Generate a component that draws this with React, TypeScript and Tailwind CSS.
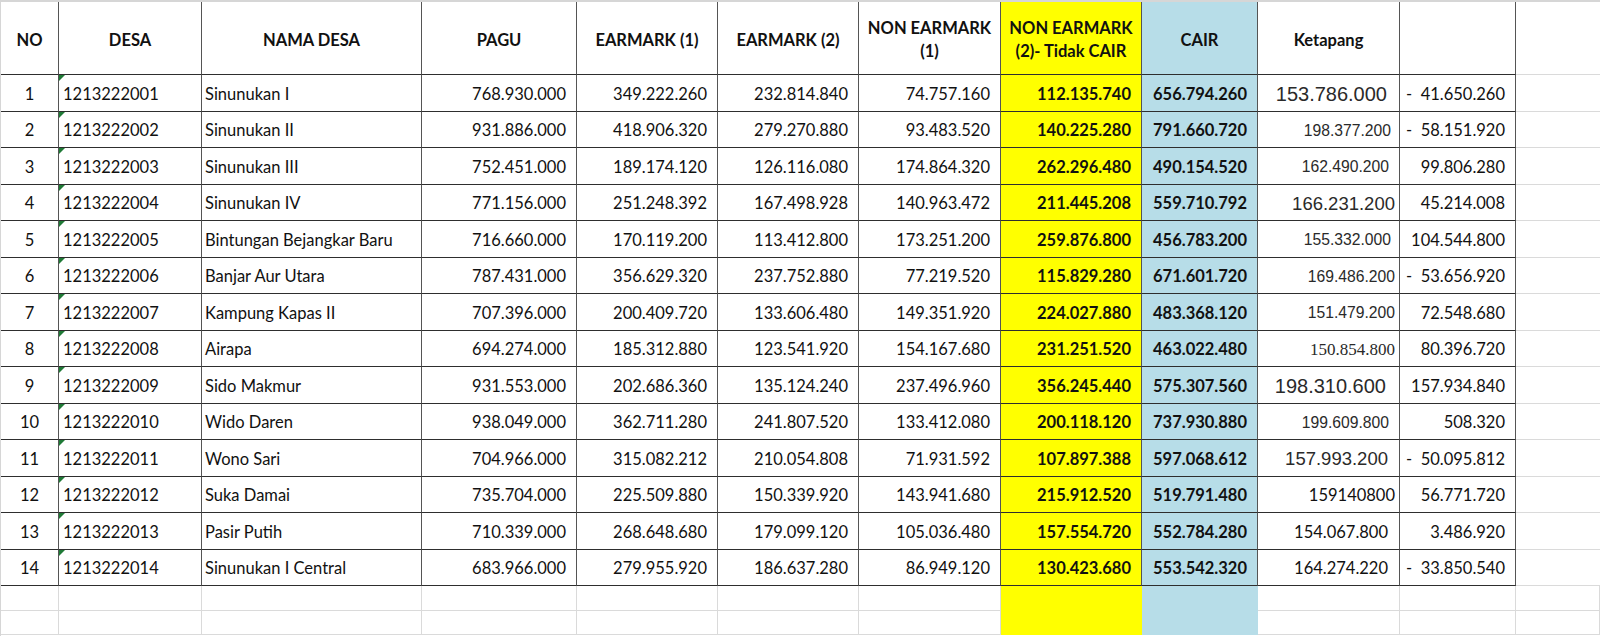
import React from 'react';

type Row = {
  no: number;
  kode: string;
  nama: string;
  pagu: string;
  e1: string;
  e2: string;
  ne1: string;
  ne2: string;
  cair: string;
  ket: string;
  ketCls: string;
  sisa: string;
  neg?: boolean;
};

// ketapang column was typed with mixed fonts in the sheet
const KET_LG = "font-['Liberation_Sans',Arial,sans-serif] text-[20px] text-[#2a2a2a]";
const KET_MD = "font-['Liberation_Sans',Arial,sans-serif] text-[18.5px] text-[#2a2a2a]";
const KET_SM = "font-['Liberation_Sans',Arial,sans-serif] text-[15.7px] text-[#2a2a2a]";
const KET_SERIF = "font-['Liberation_Serif',serif] text-[17px] text-[#2a2a2a]";
const KET_CAL = "text-[16.5px]";

const rows: Row[] = [
  { no: 1, kode: '1213222001', nama: 'Sinunukan I', pagu: '768.930.000', e1: '349.222.260', e2: '232.814.840', ne1: '74.757.160', ne2: '112.135.740', cair: '656.794.260', ket: '153.786.000', ketCls: `${KET_LG} pr-[12px]`, sisa: '41.650.260', neg: true },
  { no: 2, kode: '1213222002', nama: 'Sinunukan II', pagu: '931.886.000', e1: '418.906.320', e2: '279.270.880', ne1: '93.483.520', ne2: '140.225.280', cair: '791.660.720', ket: '198.377.200', ketCls: `${KET_SM} pr-[8px]`, sisa: '58.151.920', neg: true },
  { no: 3, kode: '1213222003', nama: 'Sinunukan III', pagu: '752.451.000', e1: '189.174.120', e2: '126.116.080', ne1: '174.864.320', ne2: '262.296.480', cair: '490.154.520', ket: '162.490.200', ketCls: `${KET_SM} pr-[10px]`, sisa: '99.806.280' },
  { no: 4, kode: '1213222004', nama: 'Sinunukan IV', pagu: '771.156.000', e1: '251.248.392', e2: '167.498.928', ne1: '140.963.472', ne2: '211.445.208', cair: '559.710.792', ket: '166.231.200', ketCls: `${KET_MD} pr-[4px]`, sisa: '45.214.008' },
  { no: 5, kode: '1213222005', nama: 'Bintungan Bejangkar Baru', pagu: '716.660.000', e1: '170.119.200', e2: '113.412.800', ne1: '173.251.200', ne2: '259.876.800', cair: '456.783.200', ket: '155.332.000', ketCls: `${KET_SM} pr-[8px]`, sisa: '104.544.800' },
  { no: 6, kode: '1213222006', nama: 'Banjar Aur Utara', pagu: '787.431.000', e1: '356.629.320', e2: '237.752.880', ne1: '77.219.520', ne2: '115.829.280', cair: '671.601.720', ket: '169.486.200', ketCls: `${KET_SM} pr-[4px]`, sisa: '53.656.920', neg: true },
  { no: 7, kode: '1213222007', nama: 'Kampung Kapas II', pagu: '707.396.000', e1: '200.409.720', e2: '133.606.480', ne1: '149.351.920', ne2: '224.027.880', cair: '483.368.120', ket: '151.479.200', ketCls: `${KET_SM} pr-[4px]`, sisa: '72.548.680' },
  { no: 8, kode: '1213222008', nama: 'Airapa', pagu: '694.274.000', e1: '185.312.880', e2: '123.541.920', ne1: '154.167.680', ne2: '231.251.520', cair: '463.022.480', ket: '150.854.800', ketCls: `${KET_SERIF} pr-[4px]`, sisa: '80.396.720' },
  { no: 9, kode: '1213222009', nama: 'Sido Makmur', pagu: '931.553.000', e1: '202.686.360', e2: '135.124.240', ne1: '237.496.960', ne2: '356.245.440', cair: '575.307.560', ket: '198.310.600', ketCls: `${KET_LG} pr-[13px]`, sisa: '157.934.840' },
  { no: 10, kode: '1213222010', nama: 'Wido Daren', pagu: '938.049.000', e1: '362.711.280', e2: '241.807.520', ne1: '133.412.080', ne2: '200.118.120', cair: '737.930.880', ket: '199.609.800', ketCls: `${KET_SM} pr-[10px]`, sisa: '508.320' },
  { no: 11, kode: '1213222011', nama: 'Wono Sari', pagu: '704.966.000', e1: '315.082.212', e2: '210.054.808', ne1: '71.931.592', ne2: '107.897.388', cair: '597.068.612', ket: '157.993.200', ketCls: `${KET_MD} pr-[11px]`, sisa: '50.095.812', neg: true },
  { no: 12, kode: '1213222012', nama: 'Suka Damai', pagu: '735.704.000', e1: '225.509.880', e2: '150.339.920', ne1: '143.941.680', ne2: '215.912.520', cair: '519.791.480', ket: '159140800', ketCls: `${KET_CAL} pr-[4px]`, sisa: '56.771.720' },
  { no: 13, kode: '1213222013', nama: 'Pasir Putih', pagu: '710.339.000', e1: '268.648.680', e2: '179.099.120', ne1: '105.036.480', ne2: '157.554.720', cair: '552.784.280', ket: '154.067.800', ketCls: `${KET_CAL} pr-[11px]`, sisa: '3.486.920' },
  { no: 14, kode: '1213222014', nama: 'Sinunukan I Central', pagu: '683.966.000', e1: '279.955.920', e2: '186.637.280', ne1: '86.949.120', ne2: '130.423.680', cair: '553.542.320', ket: '164.274.220', ketCls: `${KET_CAL} pr-[11px]`, sisa: '33.850.540', neg: true },
];

const COLS =
  'grid grid-cols-[58px_143px_220px_155px_141px_141px_142px_141px_116px_142px_116px_1fr]';

const cell = 'border-r border-b border-r-[#555] border-b-[#2e2e2e] flex items-center';
const data = `${cell} pt-[3px]`;
const num = `${data} justify-end pr-[10px]`;
const head = `${cell} justify-center text-center font-bold leading-[23px] pt-[4px]`;

function GreenMark() {
  return (
    <span className="absolute left-0 top-0 w-0 h-0 border-t-[6px] border-r-[6px] border-t-[#1f7a36] border-r-transparent" />
  );
}

export default function App() {
  return (
    <div className="w-[1600px] h-[636px] bg-white overflow-hidden font-[Lato,Carlito,sans-serif] text-[16.5px] text-[#111] border-t-2 border-l border-[#d6d6d6]">
      {/* Header */}
      <div className={`${COLS} h-[73px]`}>
        <div className={head}>NO</div>
        <div className={head}>DESA</div>
        <div className={head}>NAMA DESA</div>
        <div className={head}>PAGU</div>
        <div className={head}>EARMARK (1)</div>
        <div className={head}>EARMARK (2)</div>
        <div className={head}>
          NON EARMARK
          <br />
          (1)
        </div>
        <div className={`${head} bg-[#ffff00]`}>
          NON EARMARK
          <br />
          (2)- Tidak CAIR
        </div>
        <div className={`${head} bg-[#b7dde8]`}>CAIR</div>
        <div className={head}>Ketapang</div>
        <div className={head}></div>
        <div className="border-b border-[#dadada]"></div>
      </div>

      {/* Data rows */}
      {rows.map((r) => (
        <div key={r.no} className={`${COLS} h-[36.5px]`}>
          <div className={`${data} justify-center`}>{r.no}</div>
          <div className={`${data} relative pl-[4px]`}>
            <GreenMark />
            {r.kode}
          </div>
          <div className={`${data} pl-[3px] whitespace-nowrap`}>{r.nama}</div>
          <div className={num}>{r.pagu}</div>
          <div className={num}>{r.e1}</div>
          <div className={num}>{r.e2}</div>
          <div className={num}>{r.ne1}</div>
          <div className={`${num} bg-[#ffff00] font-bold`}>{r.ne2}</div>
          <div className={`${num} bg-[#b7dde8] font-bold`}>{r.cair}</div>
          <div className={`${data} justify-end ${r.ketCls}`}>{r.ket}</div>
          <div className={`${data} justify-between pl-[6px] pr-[10px]`}>
            <span>{r.neg ? '-' : ''}</span>
            <span>{r.sisa}</span>
          </div>
          <div className="border-b border-[#dadada]"></div>
        </div>
      ))}

      {/* Empty rows */}
      {[0, 1].map((i) => (
        <div key={i} className={`${COLS} h-[24.5px]`}>
          {Array.from({ length: 12 }).map((_, c) =>
            c === 7 ? (
              <div key={c} className="bg-[#ffff00]"></div>
            ) : c === 8 ? (
              <div key={c} className="bg-[#b7dde8]"></div>
            ) : (
              <div key={c} className="border-r border-b border-[#dadada]"></div>
            )
          )}
        </div>
      ))}
    </div>
  );
}
